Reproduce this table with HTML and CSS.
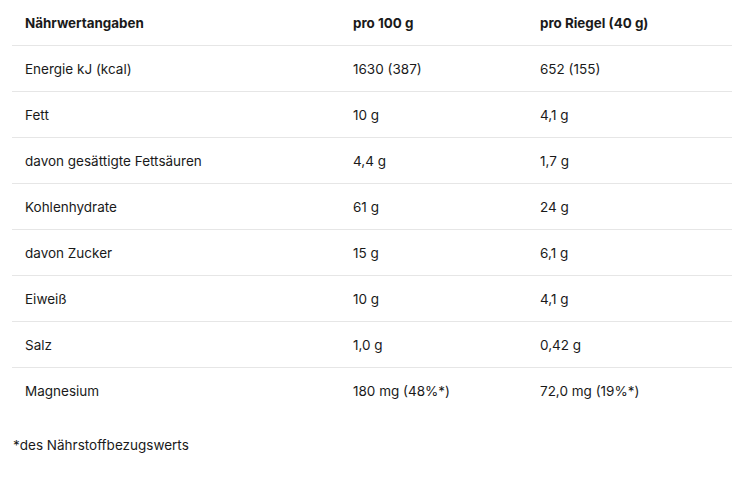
FILE: index.html
```html
<!DOCTYPE html>
<html lang="de">
<head>
<meta charset="utf-8">
<link rel="stylesheet" href="styles.css">
</head>
<body>
<div class="page">
  <div class="table">
    <div class="row head">
      <div class="cell">Nährwertangaben</div>
      <div class="cell">pro 100 g</div>
      <div class="cell">pro Riegel (40 g)</div>
    </div>
    <div class="row">
      <div class="cell">Energie kJ (kcal)</div>
      <div class="cell">1630 (387)</div>
      <div class="cell">652 (155)</div>
    </div>
    <div class="row">
      <div class="cell">Fett</div>
      <div class="cell">10 g</div>
      <div class="cell">4,1 g</div>
    </div>
    <div class="row">
      <div class="cell">davon gesättigte Fettsäuren</div>
      <div class="cell">4,4 g</div>
      <div class="cell">1,7 g</div>
    </div>
    <div class="row">
      <div class="cell">Kohlenhydrate</div>
      <div class="cell">61 g</div>
      <div class="cell">24 g</div>
    </div>
    <div class="row">
      <div class="cell">davon Zucker</div>
      <div class="cell">15 g</div>
      <div class="cell">6,1 g</div>
    </div>
    <div class="row">
      <div class="cell">Eiweiß</div>
      <div class="cell">10 g</div>
      <div class="cell">4,1 g</div>
    </div>
    <div class="row">
      <div class="cell">Salz</div>
      <div class="cell">1,0 g</div>
      <div class="cell">0,42 g</div>
    </div>
    <div class="row last">
      <div class="cell">Magnesium</div>
      <div class="cell">180 mg (48%*)</div>
      <div class="cell">72,0 mg (19%*)</div>
    </div>
  </div>
  <p class="note">*des Nährstoffbezugswerts</p>
</div>
</body>
</html>
```

FILE: styles.css
```css
html, body {
  margin: 0;
  padding: 0;
  background: #ffffff;
}
body {
  font-family: Inter, "Liberation Sans", sans-serif;
  font-size: 13.5px;
  color: #1a1a1a;
}
.page {
  padding-left: 12px;
}
.table {
  display: flex;
  flex-direction: column;
}
.row {
  display: grid;
  grid-template-columns: 328px 187px 1fr;
  height: 45px;
  align-items: center;
  border-bottom: 1px solid #e6e6e6;
}
.row.last {
  border-bottom: none;
}
.cell {
  padding-left: 13px;
  white-space: nowrap;
}
.head .cell {
  font-weight: 700;
  font-size: 13.4px;
}
.note {
  margin: 22px 0 0 1px;
  line-height: 20px;
}
```
